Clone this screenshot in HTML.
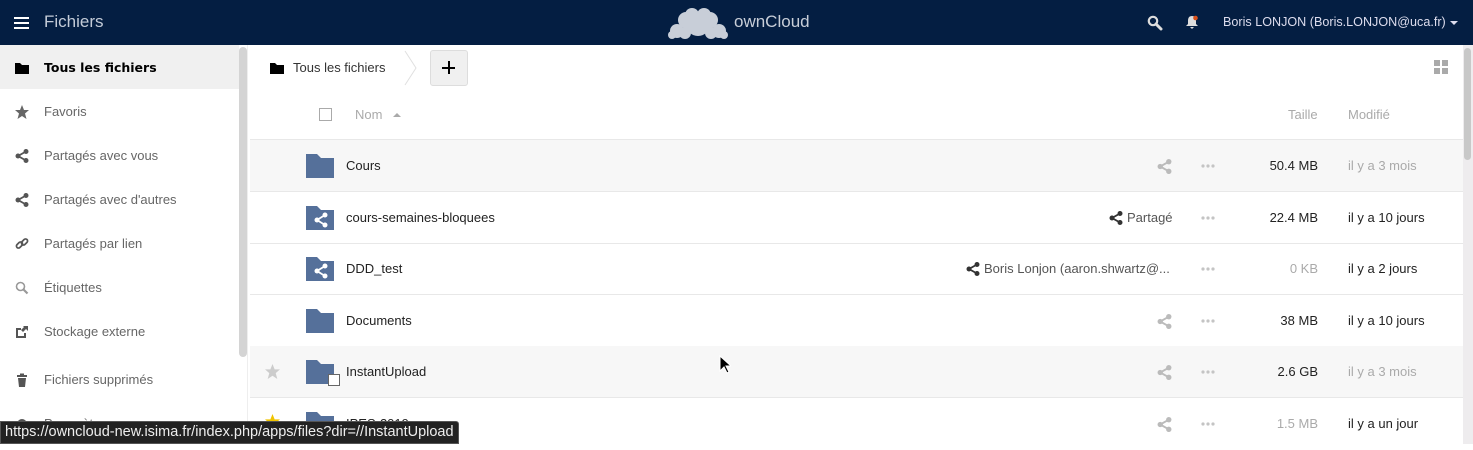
<!DOCTYPE html>
<html><head><meta charset="utf-8"><style>
*{margin:0;padding:0;box-sizing:border-box}
body{width:1473px;height:444px;overflow:hidden;background:#fff;font-family:"Liberation Sans","DejaVu Sans",sans-serif;font-size:13px;color:#222;position:relative}
.a{position:absolute}
#hdr{left:0;top:0;width:1473px;height:45px;background:#041e42}
.nav{left:0;width:239px;height:44px}
.nav span{position:absolute;left:44px;top:15px;color:#666;font-size:13px}
.nav svg{position:absolute;left:15px;top:16px}
.row{left:250px;width:1213px;height:52px;border-bottom:1px solid #e8e8e8}
.row .nm{position:absolute;left:96px;top:18px;font-size:13px;color:#222}
.row .fold{position:absolute;left:56px;top:14px}
.row .dots{position:absolute;left:951px;top:24px}
.row .sz{position:absolute;right:145px;top:18px;text-align:right}
.row .md{position:absolute;left:1098px;top:18px}
.gr{color:#aaa}
</style></head><body>
<div id="hdr" class="a">
 <div class="a" style="left:14px;top:17px;width:15px;height:2px;background:#fff;box-shadow:0 5px 0 #fff,0 10px 0 #fff"></div>
 <div class="a" style="left:44px;top:12px;font-size:17px;color:#c4ccd8">Fichiers</div>
 <svg class="a" style="left:668px;top:6px" width="60" height="34" viewBox="0 0 60 34"><g fill="#c8ced8"><circle cx="30" cy="18" r="12"/><circle cx="18" cy="14" r="8"/><circle cx="42" cy="14" r="8"/><circle cx="24" cy="9" r="7"/><circle cx="36" cy="9" r="7"/><circle cx="9" cy="25" r="7"/><circle cx="51" cy="25" r="7"/><circle cx="17" cy="27" r="6"/><circle cx="43" cy="27" r="6"/><circle cx="4" cy="29" r="4"/><circle cx="56" cy="29" r="4"/></g></svg>
 <div class="a" style="left:734px;top:12px;font-size:17px;color:#c8ced8">ownCloud</div>
 <svg class="a" style="left:1147px;top:15px" width="16" height="16" viewBox="0 0 16 16"><circle cx="6" cy="6" r="4.2" fill="none" stroke="#ddd" stroke-width="2.2"/><path d="M9 9l5 5" stroke="#ddd" stroke-width="3" stroke-linecap="round"/></svg>
 <svg class="a" style="left:1185px;top:15px" width="14" height="15" viewBox="0 0 14 15"><path d="M7 1c3 0 4 2 4 5v3l2 2H1l2-2V6c0-3 1-5 4-5zM5 12h4l-2 2z" fill="#ddd"/><circle cx="10.5" cy="3" r="2.3" fill="#d9501a"/></svg>
 <div class="a" style="left:1223px;top:15px;font-size:12.6px;color:#dde;white-space:nowrap">Boris LONJON (Boris.LONJON@uca.fr)</div>
 <div class="a" style="left:1450px;top:21px;border:4px solid transparent;border-top:4px solid #dde;border-bottom:0"></div>
</div>
<!-- sidebar -->
<div class="a" style="left:0;top:45px;width:248px;height:399px;background:#fff;border-right:1px solid #eee"></div>
<div class="a" style="left:239px;top:47px;width:8px;height:310px;background:#d4d4d4;border-radius:4px"></div>
<div class="a nav" style="top:45px;background:#f0f0f0"><svg width="14" height="14" viewBox="0 0 14 14"><path d="M0 2h5l2 2h7v9H0z" fill="#000"/></svg><span style="color:#000;font-weight:bold;font-family:'DejaVu Sans',sans-serif;font-size:12.5px">Tous les fichiers</span></div>
<div class="a nav" style="top:89px"><svg width="14" height="14" viewBox="0 0 14 14"><path d="M7 0l2 5h5l-4 3.5 1.5 5.5L7 11l-4.5 3L4 8.5 0 5h5z" fill="#666"/></svg><span>Favoris</span></div>
<div class="a nav" style="top:133px"><svg width="14" height="14" viewBox="0 0 14 14"><g fill="#555"><circle cx="11" cy="2.5" r="2.5"/><circle cx="3" cy="7" r="2.5"/><circle cx="11" cy="11.5" r="2.5"/></g><path d="M11 2.5L3 7l8 4.5" stroke="#555" stroke-width="1.8" fill="none"/></svg><span>Partagés avec vous</span></div>
<div class="a nav" style="top:177px"><svg width="14" height="14" viewBox="0 0 14 14"><g fill="#555"><circle cx="11" cy="2.5" r="2.5"/><circle cx="3" cy="7" r="2.5"/><circle cx="11" cy="11.5" r="2.5"/></g><path d="M11 2.5L3 7l8 4.5" stroke="#555" stroke-width="1.8" fill="none"/></svg><span>Partagés avec d'autres</span></div>
<div class="a nav" style="top:221px"><svg width="14" height="14" viewBox="0 0 14 14"><g fill="none" stroke="#555" stroke-width="1.7"><rect x="1" y="6" width="7" height="4" rx="2" transform="rotate(-45 4.5 8)"/><rect x="6" y="3" width="7" height="4" rx="2" transform="rotate(-45 9.5 5)"/></g></svg><span>Partagés par lien</span></div>
<div class="a nav" style="top:265px"><svg width="14" height="14" viewBox="0 0 14 14"><circle cx="5.5" cy="5.5" r="4" fill="none" stroke="#999" stroke-width="1.6"/><path d="M8.5 8.5l4 4" stroke="#999" stroke-width="2.2"/></svg><span>Étiquettes</span></div>
<div class="a nav" style="top:309px"><svg width="14" height="14" viewBox="0 0 14 14"><path d="M1 3h5v2H3v6h6V8h2v5H1z" fill="#555"/><path d="M8 1h5v5l-2-2-3 3-2-2 3-3z" fill="#555"/></svg><span>Stockage externe</span></div>
<div class="a nav" style="top:357px"><svg width="14" height="14" viewBox="0 0 14 14"><path d="M2 2h10v2H2zM5 0.5h4V2H5zM3 5h8l-1 9H4z" fill="#555"/></svg><span>Fichiers supprimés</span></div>
<div class="a nav" style="top:401px"><svg width="14" height="14" viewBox="0 0 14 14"><circle cx="7" cy="7" r="5" fill="#555"/></svg><span>Paramètres</span></div>
<!-- breadcrumb -->
<svg class="a" style="left:270px;top:61px" width="14" height="14" viewBox="0 0 14 14"><path d="M0 2h5l2 2h7v9H0z" fill="#000"/></svg>
<div class="a" style="left:293px;top:60px;color:#333">Tous les fichiers</div>
<svg class="a" style="left:404px;top:50px" width="14" height="36"><path d="M1 1l11 17L1 35" fill="none" stroke="#e0e0e0"/></svg>
<div class="a" style="left:430px;top:50px;width:38px;height:36px;background:#f0f0f0;border:1px solid #ddd;border-radius:3px"></div>
<div class="a" style="left:442px;top:67px;width:13px;height:2px;background:#000"></div>
<div class="a" style="left:448px;top:61px;width:2px;height:13px;background:#000"></div>
<svg class="a" style="left:1434px;top:60px" width="15" height="15"><g fill="#aaa"><rect x="0" y="0" width="6" height="6"/><rect x="8" y="0" width="6" height="6"/><rect x="0" y="8" width="6" height="6"/><rect x="8" y="8" width="6" height="6"/></g></svg>
<!-- header row -->
<div class="a" style="left:250px;top:88px;width:1213px;height:52px;border-bottom:1px solid #e8e8e8"></div>
<div class="a" style="left:319px;top:108px;width:13px;height:13px;border:1px solid #aaa;background:#fff"></div>
<div class="a gr" style="left:355px;top:107px">Nom</div>
<div class="a" style="left:393px;top:113px;border:4px solid transparent;border-bottom:4px solid #aaa;border-top:0"></div>
<div class="a gr" style="left:1288px;top:107px">Taille</div>
<div class="a gr" style="left:1348px;top:107px">Modifié</div>
<!-- rows -->
<div class="a row" style="top:140px;background:#f7f7f7"><svg class="fold" width="28" height="24" viewBox="0 0 28 24"><path d="M0 0h11l4 4h13v20H0z" fill="#55709a"/></svg><span class="nm">Cours</span><svg class="a" style="left:907px;top:19px" width="15" height="15" viewBox="0 0 14 14"><g fill="#bbb"><circle cx="11" cy="2.5" r="2.5"/><circle cx="3" cy="7" r="2.5"/><circle cx="11" cy="11.5" r="2.5"/></g><path d="M11 2.5L3 7l8 4.5" stroke="#bbb" stroke-width="1.8" fill="none"/></svg><svg class="dots" width="16" height="4"><g fill="#c4c4c4"><circle cx="2" cy="2" r="1.6"/><circle cx="7" cy="2" r="1.6"/><circle cx="12" cy="2" r="1.6"/></g></svg><span class="sz">50.4 MB</span><span class="md gr">il y a 3 mois</span></div>
<div class="a row" style="top:192px"><svg class="fold" width="28" height="24" viewBox="0 0 28 24"><path d="M0 0h11l4 4h13v20H0z" fill="#55709a"/><g fill="#fff"><circle cx="19" cy="9" r="2.5"/><circle cx="11" cy="14" r="2.5"/><circle cx="19" cy="19" r="2.5"/></g><path d="M19 9l-8 5 8 5" stroke="#fff" stroke-width="1.8" fill="none"/></svg><span class="nm">cours-semaines-bloquees</span><svg class="a" style="left:859px;top:19px" width="14" height="14" viewBox="0 0 14 14"><g fill="#333"><circle cx="11" cy="2.5" r="2.5"/><circle cx="3" cy="7" r="2.5"/><circle cx="11" cy="11.5" r="2.5"/></g><path d="M11 2.5L3 7l8 4.5" stroke="#333" stroke-width="1.8" fill="none"/></svg><span class="a" style="left:877px;top:18px;color:#555">Partagé</span><svg class="dots" width="16" height="4"><g fill="#c4c4c4"><circle cx="2" cy="2" r="1.6"/><circle cx="7" cy="2" r="1.6"/><circle cx="12" cy="2" r="1.6"/></g></svg><span class="sz">22.4 MB</span><span class="md">il y a 10 jours</span></div>
<div class="a row" style="top:243px"><svg class="fold" width="28" height="24" viewBox="0 0 28 24"><path d="M0 0h11l4 4h13v20H0z" fill="#55709a"/><g fill="#fff"><circle cx="19" cy="9" r="2.5"/><circle cx="11" cy="14" r="2.5"/><circle cx="19" cy="19" r="2.5"/></g><path d="M19 9l-8 5 8 5" stroke="#fff" stroke-width="1.8" fill="none"/></svg><span class="nm">DDD_test</span><svg class="a" style="left:716px;top:19px" width="14" height="14" viewBox="0 0 14 14"><g fill="#333"><circle cx="11" cy="2.5" r="2.5"/><circle cx="3" cy="7" r="2.5"/><circle cx="11" cy="11.5" r="2.5"/></g><path d="M11 2.5L3 7l8 4.5" stroke="#333" stroke-width="1.8" fill="none"/></svg><span class="a" style="left:734px;top:18px;color:#555">Boris Lonjon (aaron.shwartz@...</span><svg class="dots" width="16" height="4"><g fill="#c4c4c4"><circle cx="2" cy="2" r="1.6"/><circle cx="7" cy="2" r="1.6"/><circle cx="12" cy="2" r="1.6"/></g></svg><span class="sz gr">0 KB</span><span class="md">il y a 2 jours</span></div>
<div class="a row" style="top:295px"><svg class="fold" width="28" height="24" viewBox="0 0 28 24"><path d="M0 0h11l4 4h13v20H0z" fill="#55709a"/></svg><span class="nm">Documents</span><svg class="a" style="left:907px;top:19px" width="15" height="15" viewBox="0 0 14 14"><g fill="#bbb"><circle cx="11" cy="2.5" r="2.5"/><circle cx="3" cy="7" r="2.5"/><circle cx="11" cy="11.5" r="2.5"/></g><path d="M11 2.5L3 7l8 4.5" stroke="#bbb" stroke-width="1.8" fill="none"/></svg><svg class="dots" width="16" height="4"><g fill="#c4c4c4"><circle cx="2" cy="2" r="1.6"/><circle cx="7" cy="2" r="1.6"/><circle cx="12" cy="2" r="1.6"/></g></svg><span class="sz">38 MB</span><span class="md">il y a 10 jours</span></div>
<div class="a row" style="top:346px;background:#f7f7f7"><svg class="a" style="left:15px;top:18px" width="15" height="15" viewBox="0 0 14 14"><path d="M7 0l2 5h5l-4 3.5 1.5 5.5L7 11l-4.5 3L4 8.5 0 5h5z" fill="#ccc"/></svg><svg class="fold" width="36" height="28" viewBox="0 0 36 28"><path d="M0 0h11l4 4h13v20H0z" fill="#55709a"/><rect x="22.5" y="14.5" width="11" height="11" fill="#fff" stroke="#666"/></svg><span class="nm">InstantUpload</span><svg class="a" style="left:907px;top:19px" width="15" height="15" viewBox="0 0 14 14"><g fill="#bbb"><circle cx="11" cy="2.5" r="2.5"/><circle cx="3" cy="7" r="2.5"/><circle cx="11" cy="11.5" r="2.5"/></g><path d="M11 2.5L3 7l8 4.5" stroke="#bbb" stroke-width="1.8" fill="none"/></svg><svg class="dots" width="16" height="4"><g fill="#c4c4c4"><circle cx="2" cy="2" r="1.6"/><circle cx="7" cy="2" r="1.6"/><circle cx="12" cy="2" r="1.6"/></g></svg><span class="sz">2.6 GB</span><span class="md gr">il y a 3 mois</span></div>
<div class="a row" style="top:398px;border:none"><svg class="a" style="left:15px;top:16px" width="15" height="15" viewBox="0 0 14 14"><path d="M7 0l2 5h5l-4 3.5 1.5 5.5L7 11l-4.5 3L4 8.5 0 5h5z" fill="#f0c400"/></svg><svg class="fold" width="28" height="24" viewBox="0 0 28 24"><path d="M0 0h11l4 4h13v20H0z" fill="#55709a"/></svg><span class="nm">IPES-2019</span><svg class="a" style="left:907px;top:19px" width="15" height="15" viewBox="0 0 14 14"><g fill="#bbb"><circle cx="11" cy="2.5" r="2.5"/><circle cx="3" cy="7" r="2.5"/><circle cx="11" cy="11.5" r="2.5"/></g><path d="M11 2.5L3 7l8 4.5" stroke="#bbb" stroke-width="1.8" fill="none"/></svg><svg class="dots" width="16" height="4"><g fill="#c4c4c4"><circle cx="2" cy="2" r="1.6"/><circle cx="7" cy="2" r="1.6"/><circle cx="12" cy="2" r="1.6"/></g></svg><span class="sz gr">1.5 MB</span><span class="md">il y a un jour</span></div>
<!-- right scrollbar -->
<div class="a" style="left:1463px;top:45px;width:10px;height:399px;background:#eeecee"></div>
<div class="a" style="left:1464px;top:48px;width:7px;height:112px;background:#c8c8c8;border-radius:4px"></div>
<!-- cursor -->
<svg class="a" style="left:719px;top:355px" width="12" height="20" viewBox="0 0 12 20"><path d="M1 1v15l4-4 3 6 2-1-3-6h5z" fill="#000" stroke="#fff" stroke-width="1"/></svg>
<!-- status tooltip -->
<div class="a" style="left:0;top:421px;width:459px;height:23px;background:#222;border:1px solid #555;border-radius:0 3px 0 0;color:#eee;font-size:14.5px;padding:2px 4px;white-space:nowrap;overflow:hidden">https://owncloud-new.isima.fr/index.php/apps/files?dir=//InstantUpload</div>
</body></html>
